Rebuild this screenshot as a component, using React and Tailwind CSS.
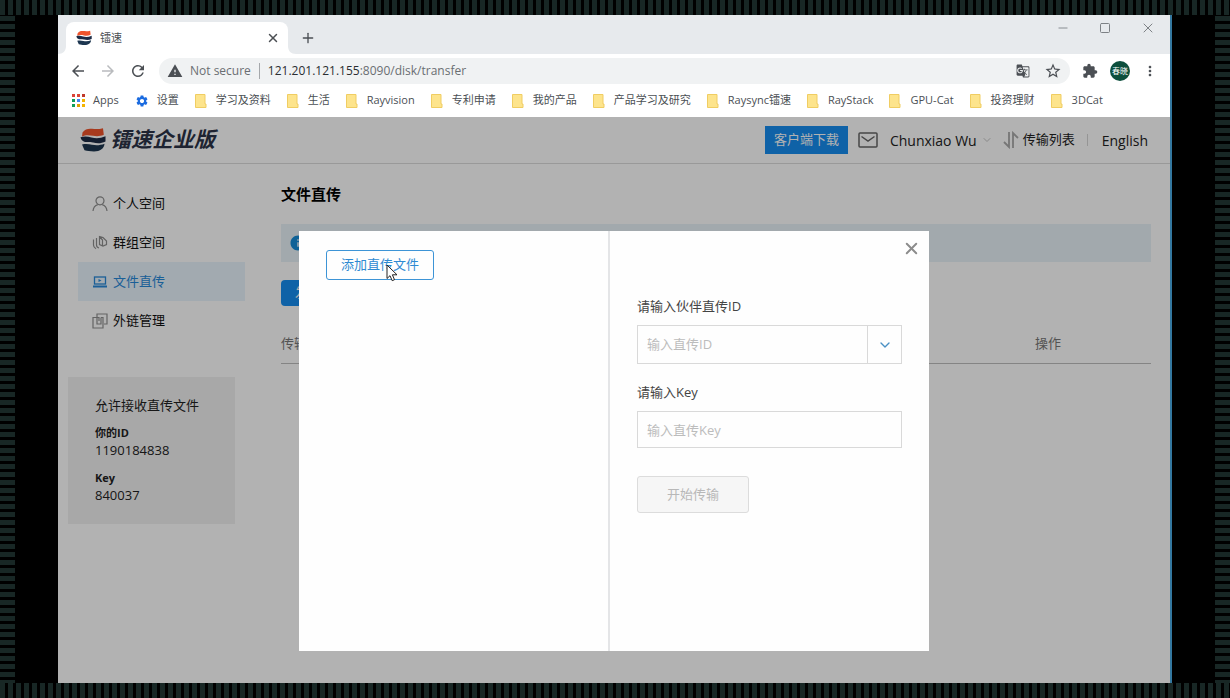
import React, { useState } from "react";
import {
  MdArrowBack,
  MdArrowForward,
  MdRefresh,
  MdWarning,
  MdGTranslate,
  MdStarBorder,
  MdMoreVert,
  MdSettings,
  MdInfo,
} from "react-icons/md";
import { Plus, X, Minus, Square, ChevronDown } from "lucide-react";

const bookmarks = [
  "学习及资料",
  "生活",
  "Rayvision",
  "专利申请",
  "我的产品",
  "产品学习及研究",
  "Raysync镭速",
  "RayStack",
  "GPU-Cat",
  "投资理财",
  "3DCat",
];

const appColors = [
  "#db4437", "#db4437", "#c0392b",
  "#0f9d58", "#4285f4", "#f4b400",
  "#0f9d58", "#e0a000", "#f4b400",
];

const Logo = ({ className }) => (
  <svg viewBox="0 0 26 24" className={className} aria-hidden="true">
    <path
      d="M2.500 4.500C5 1 8 .5 12 .8c4 .3 7 .4 11-.6l.8 6.600c-4 1.600-7 1.600-10.800 1C9.500 7.200 6 6.500 2 8.500z"
      fill="#f0542c"
    />
    <path
      d="M.5 9.200c3.500-1.200 7-1 11 .2 4.500 1.300 9 1 14-1.200v5.300c-4 2-8 2.200-12.500 1-3-.8-5.500-.6-8-.6C2.500 13.500 1 11.500.5 9.200z"
      fill="#1d2b45"
    />
    <path
      d="M2 16.500c4-.8 7-.3 10 .3 4.500.9 8.500.5 12.500-1 0 4.500-4.500 7.700-10.500 7.700-4.500 0-6.500-.7-9.500-1.200z"
      fill="#1d3650"
    />
  </svg>
);

const AppsIcon = () => (
  <svg viewBox="0 0 13 13" className="size-[13px]" aria-hidden="true">
    {appColors.map((color, i) => (
      <rect
        key={i}
        x={(i % 3) * 5}
        y={Math.floor(i / 3) * 5}
        width="3"
        height="3"
        fill={color}
      />
    ))}
  </svg>
);

const FolderIcon = () => (
  <svg viewBox="0 0 12 14" className="h-3.5 w-3 shrink-0" aria-hidden="true">
    <path d="M.5.5h9.500v9.500h1v3.500H.5z" fill="#fde48c" stroke="#f0cd62" />
  </svg>
);

const PuzzleIcon = ({ className }) => (
  <svg viewBox="0 0 24 24" className={className} fill="currentColor" aria-hidden="true">
    <path d="M20.500 11H19V7c0-1.100-.9-2-2-2h-4V3.500a2.500 2.500 0 0 0-5 0V5H4c-1.100 0-2 .9-2 2v3.800h1.500a2.700 2.700 0 0 1 0 5.400H2V20c0 1.100.9 2 2 2h3.800v-1.500a2.700 2.700 0 0 1 5.400 0V22H17c1.100 0 2-.9 2-2v-4h1.500a2.500 2.500 0 0 0 0-5z" />
  </svg>
);

const UserIcon = () => (
  <svg viewBox="0 0 16 16" className="size-4" fill="none" stroke="currentColor" strokeWidth="1.200" aria-hidden="true">
    <circle cx="8" cy="4.800" r="4" />
    <path d="M1 15c.3-3.300 2-5.500 4.800-6.400M15 15c-.3-3.300-2-5.500-4.800-6.400" />
  </svg>
);

const GroupIcon = () => (
  <svg viewBox="0 0 16 16" className="size-4" fill="none" stroke="currentColor" strokeWidth="1.200" aria-hidden="true">
    <path d="M7.500 1.500v8l3.500 1.500 3.500-1.500V6L11 2.500zM7.500 1.500L10.500 5v5.500" />
    <path d="M4.500 3v7c0 1.500.8 2.500 2.500 3M1.500 4.500V10c0 1.800 1 3 2.500 3.800" />
  </svg>
);

const LaptopIcon = () => (
  <svg viewBox="0 0 16 16" className="size-4" fill="none" stroke="currentColor" strokeWidth="1.300" aria-hidden="true">
    <rect x="2.500" y="3" width="11" height="7" />
    <path d="M1 12.500h14" strokeWidth="2" />
    <path d="M6.500 5l3 1.500-3 1.500z" fill="currentColor" stroke="none" />
  </svg>
);

const LinkIcon = () => (
  <svg viewBox="0 0 16 16" className="size-4" fill="none" stroke="currentColor" strokeWidth="1.200" aria-hidden="true">
    <path d="M9 4.500V11H5V1h10v10h-3" />
    <path d="M7 8V4.500H1V15h10V4.500H9" />
  </svg>
);

const menu = [
  { label: "个人空间", icon: UserIcon },
  { label: "群组空间", icon: GroupIcon },
  { label: "文件直传", icon: LaptopIcon, active: true },
  { label: "外链管理", icon: LinkIcon },
];

const BrowserChrome = () => (
  <div className="bg-white text-[#4b4f54]">
    <div className="flex h-[39px] items-end bg-[#e7eaed] pl-2">
      <div className="relative flex h-8 w-[222px] items-center rounded-t-lg bg-white pr-2 pl-2.5">
        <svg viewBox="0 0 8 8" className="absolute bottom-0 -left-2 size-2" aria-hidden="true">
          <path d="M8 0v8H0c5 0 8-3 8-8z" fill="#fff" />
        </svg>
        <svg viewBox="0 0 8 8" className="absolute -right-2 bottom-0 size-2" aria-hidden="true">
          <path d="M0 0v8h8C3 8 0 5 0 0z" fill="#fff" />
        </svg>
        <Logo className="size-4" />
        <span className="ml-2 flex-1 text-[11px]">镭速</span>
        <button type="button" aria-label="Close tab">
          <X className="size-3.5" strokeWidth={2.5} />
        </button>
      </div>
      <button type="button" aria-label="New tab" className="mb-2 ml-3">
        <Plus className="size-4" strokeWidth={2} />
      </button>
      <div className="mb-[18px] ml-auto flex gap-[29px] pr-3.5 text-[#7d8185]">
        <button type="button" aria-label="Minimize">
          <Minus className="size-3.5" strokeWidth={1.5} />
        </button>
        <button type="button" aria-label="Maximize">
          <Square className="size-3" strokeWidth={2} />
        </button>
        <button type="button" aria-label="Close window">
          <X className="size-4" strokeWidth={1.5} />
        </button>
      </div>
    </div>

    <div className="flex h-[34px] items-center pr-3 pl-[11px]">
      <button type="button" aria-label="Back">
        <MdArrowBack className="size-[18px]" />
      </button>
      <button type="button" aria-label="Forward" className="ml-3 text-[#b9bbbe]">
        <MdArrowForward className="size-[18px]" />
      </button>
      <button type="button" aria-label="Reload" className="ml-3">
        <MdRefresh className="size-[18px]" />
      </button>
      <div className="ml-3 flex h-[26px] flex-1 items-center rounded-full bg-[#f0f2f3] pr-2 pl-2">
        <MdWarning className="size-4" />
        <span className="ml-[7px] text-[12px] text-[#6a6e72]">Not secure</span>
        <span className="mx-2 h-4 w-px bg-[#a5a8ab]" />
        <span className="flex-1 text-[12px] text-[#6a6e72]">
          <span className="text-[#2b2e31]">121.201.121.155</span>
          :8090/disk/transfer
        </span>
        <MdGTranslate className="size-3.5" />
        <MdStarBorder className="ml-3.5 size-[18px]" />
      </div>
      <PuzzleIcon className="ml-3 size-4" />
      <span className="ml-3 flex size-5 items-center justify-center rounded-full bg-[#0d4f3d] text-[8px] text-white">
        春晓
      </span>
      <button type="button" aria-label="Menu" className="ml-3">
        <MdMoreVert className="size-4" />
      </button>
    </div>

    <div className="flex h-[29px] items-center gap-4 pb-1 pl-3.5 text-[11px] whitespace-nowrap">
      <a href="#apps" className="flex items-center gap-2">
        <AppsIcon />
        Apps
      </a>
      <a href="#settings" className="flex items-center gap-2">
        <MdSettings className="size-3.5 text-[#1a6be0]" />
        设置
      </a>
      {bookmarks.map((name) => (
        <a key={name} href="#bookmark" className="flex items-center gap-[9px]">
          <FolderIcon />
          {name}
        </a>
      ))}
    </div>
  </div>
);

const Header = () => (
  <header className="flex h-[47px] items-center border-b border-[#dcdcdc] pr-[22px] pl-[22px] text-[14px] text-[#222]">
    <Logo className="h-6 w-[26px]" />
    <span className="ml-1 text-[21px] font-bold text-[#2b3347] italic">镭速企业版</span>
    <button type="button" className="ml-auto h-7 bg-[#168def] px-[9px] text-[13px] text-white">
      客户端下载
    </button>
    <svg viewBox="0 0 20 16" className="ml-2.5 h-4 w-5" fill="none" stroke="#666" strokeWidth="1.500" aria-hidden="true">
      <rect x="1" y="1" width="18" height="14" rx="1" />
      <path d="M3.500 4.500L10 9l6.500-4.500" />
    </svg>
    <button type="button" className="ml-3 flex items-center gap-1">
      Chunxiao Wu
      <ChevronDown className="size-3 text-[#c4c4c4]" />
    </button>
    <button type="button" className="ml-2.5 flex items-center gap-1 text-[13px]">
      <svg viewBox="0 0 16 18" className="h-[18px] w-4" fill="none" stroke="#a9a9a9" strokeWidth="1.800" aria-hidden="true">
        <path d="M6 1v15L1 11M10 17V2l5 5" />
      </svg>
      传输列表
    </button>
    <span className="mr-3.5 ml-3 h-3 w-px bg-[#d6d6d6]" />
    <a href="#language">English</a>
  </header>
);

const Sidebar = () => (
  <aside className="w-[187px] shrink-0 pt-5">
    <nav className="ml-5">
      {menu.map(({ label, icon: Icon, active }) => (
        <a
          key={label}
          href="#menu"
          className={`flex h-[39px] items-center gap-[5px] pl-3.5 text-[13px] ${
            active ? "bg-[#e8f4fd] text-[#2789d8]" : "text-[#111]"
          }`}
        >
          <span className={active ? "text-[#2789d8]" : "text-[#8f8f8f]"}>
            <Icon />
          </span>
          {label}
        </a>
      ))}
    </nav>
    <div className="mt-[37px] mr-2.5 ml-2.5 bg-[#f1f1f1] px-[27px] pt-[19px] pb-5 text-[13px] text-[#222]">
      <p className="leading-[18px]">允许接收直传文件</p>
      <p className="mt-2.5 text-[11px] leading-[18px] font-bold">你的ID</p>
      <p className="leading-[17px]">1190184838</p>
      <p className="mt-2.5 text-[11px] leading-[18px] font-bold">Key</p>
      <p className="leading-[17px]">840037</p>
    </div>
  </aside>
);

const Content = () => (
  <main className="min-w-0 flex-1 pt-5 pr-[19px] pl-9">
    <h1 className="text-[15px] leading-5 font-bold text-black">文件直传</h1>
    <div className="mt-5 flex h-[38px] items-center bg-[#e8f2f8] pl-2">
      <MdInfo className="size-[18px] text-[#168dd8]" />
    </div>
    <button type="button" className="mt-[18px] block h-[26px] rounded-sm bg-[#168def] px-3.5 text-[13px] text-white">
      发送
    </button>
    <table className="mt-[18px] w-full table-fixed border-b border-[#bdbdbd] text-left text-[13px] text-[#777]">
      <thead>
        <tr className="h-[39px]">
          <th className="font-normal">传输</th>
          <th className="w-[116px] font-normal">操作</th>
        </tr>
      </thead>
    </table>
  </main>
);

const TransferDialog = () => {
  const [partnerId, setPartnerId] = useState("");
  const [key, setKey] = useState("");

  return (
    <div className="absolute inset-0 flex items-start justify-center bg-black/30 pt-[114px]">
      <div role="dialog" aria-label="文件直传" className="flex min-h-[420px] w-[630px] bg-[#fefefe] text-[13px]">
        <div className="w-[309px] shrink-0 px-[27px] pt-[19px]">
          <div className="relative inline-block">
            <button
              type="button"
              className="h-[30px] rounded-[3px] border border-[#3d94d6] px-3.5 text-[#2f8ad2]"
            >
              添加直传文件
            </button>
            <svg viewBox="0 0 12 18" className="absolute top-3.5 left-[60px] h-[18px] w-3" aria-hidden="true">
              <path d="M1 1v13.500l3-2.800 2.200 5 2.300-1-2.100-4.900H11z" fill="#fff" stroke="#222" />
            </svg>
          </div>
        </div>
        <form className="relative min-w-0 flex-1 border-l-2 border-[#e4e5e7] px-[27px] pt-[65px] text-[#444]">
          <button type="button" aria-label="Close" className="absolute top-2 right-2 text-[#8c8c8c]">
            <X className="size-[19px]" strokeWidth={2.5} />
          </button>
          <label htmlFor="partner-id" className="block leading-5">
            请输入伙伴直传ID
          </label>
          <div className="mt-[9px] flex h-[39px] border border-[#d9d9d9]">
            <input
              id="partner-id"
              value={partnerId}
              onChange={(e) => setPartnerId(e.target.value)}
              placeholder="输入直传ID"
              className="min-w-0 flex-1 px-[9px] outline-none placeholder:text-[#bcbcbc]"
            />
            <button
              type="button"
              aria-label="Show partners"
              className="flex w-[34px] items-center justify-center border-l border-[#d9d9d9] text-[#4a90c4]"
            >
              <ChevronDown className="size-4" strokeWidth={2} />
            </button>
          </div>
          <label htmlFor="partner-key" className="mt-[18px] block leading-5">
            请输入Key
          </label>
          <input
            id="partner-key"
            value={key}
            onChange={(e) => setKey(e.target.value)}
            placeholder="输入直传Key"
            className="mt-[9px] block h-[37px] w-full border border-[#d9d9d9] px-[9px] outline-none placeholder:text-[#bcbcbc]"
          />
          <button
            type="button"
            disabled
            className="mt-7 h-[37px] w-28 rounded-[3px] border border-[#dcdcdc] bg-[#f6f6f6] text-[#b8b8b8]"
          >
            开始传输
          </button>
        </form>
      </div>
    </div>
  );
};

const App = () => {
  return (
    <div className="flex min-h-screen flex-col bg-black font-['Open_Sans','Noto_Sans_CJK_SC',sans-serif]">
      <div className="h-[15px] bg-[repeating-linear-gradient(90deg,#182725_0px,#182725_5px,#000_5px,#000_8px)]" />
      <div className="flex flex-1">
        <div className="w-[15px] shrink-0 bg-[repeating-linear-gradient(180deg,#000_0px,#000_1px,#182725_1px,#182725_6px,#000_6px,#000_8px)]" />
        <div className="mx-[43px] flex min-w-0 flex-1 flex-col border-r-2 border-[#3478a0]">
          <BrowserChrome />
          <div className="relative flex-1 bg-white">
            <Header />
            <div className="flex">
              <Sidebar />
              <Content />
            </div>
            <TransferDialog />
          </div>
        </div>
        <div className="w-[15px] shrink-0 bg-[repeating-linear-gradient(180deg,#000_0px,#000_1px,#182725_1px,#182725_6px,#000_6px,#000_8px)]" />
      </div>
      <div className="h-[15px] bg-[repeating-linear-gradient(90deg,#182725_0px,#182725_5px,#000_5px,#000_8px)]" />
    </div>
  );
};

export default App;
